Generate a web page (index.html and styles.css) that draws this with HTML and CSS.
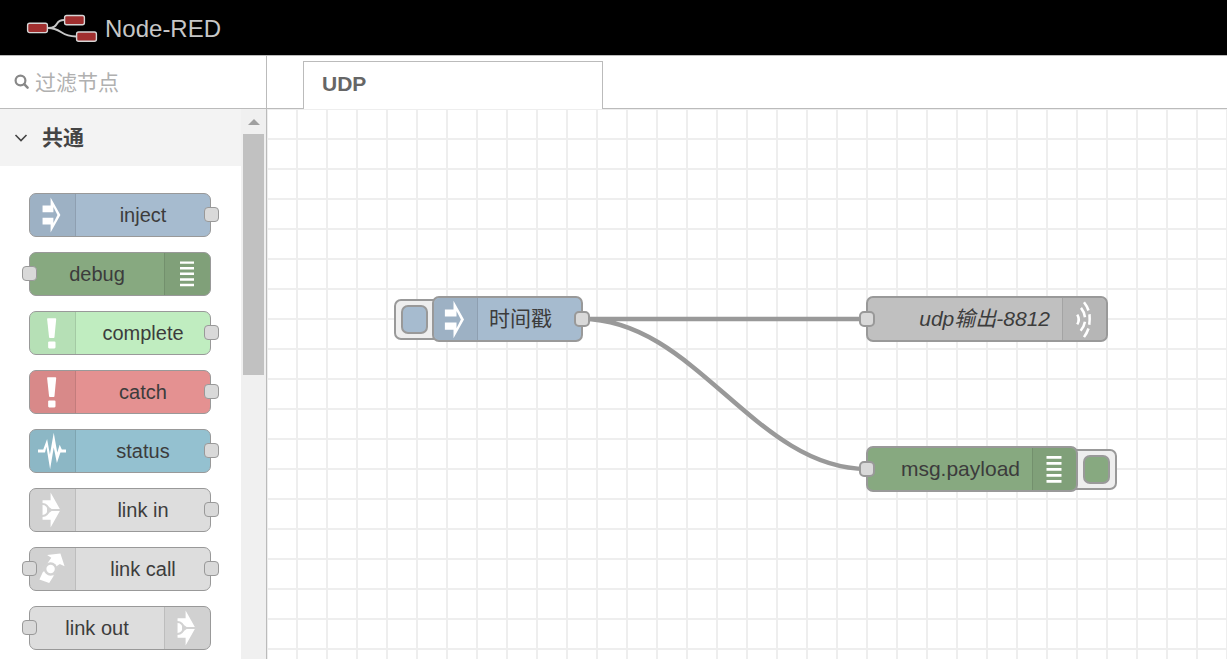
FILE: index.html
```
<!DOCTYPE html>
<html lang="zh-CN">
<head>
<meta charset="utf-8">
<title>Node-RED</title>
<link rel="stylesheet" href="styles.css">
</head>
<body>
<svg class="symbols" aria-hidden="true">
  <symbol id="i-inject" viewBox="0 0 40 60"><path fill="#fff" d="M18 5 32 30 18 55V43.500H6.500V34H22V41.500L27.800 30 22 18.500V26H6.500V16.500H18Z"/></symbol>
  <symbol id="i-debug" viewBox="0 0 40 60"><path fill="#fff" d="M10 12h20v3.500H10zM10 20h20v3.500H10zM10 28h20v3.500H10zM10 36h20v3.500H10zM10 44h20v3.500H10z"/></symbol>
  <symbol id="i-alert" viewBox="0 0 40 60"><path fill="#fff" d="M14 9H25Q26 9 26 10L23.500 36Q23.400 37 22.500 37H17Q16 37 15.800 36L13 10Q13 9 14 9Z"/><rect x="14.500" y="42" width="10.500" height="10" rx="1.500" fill="#fff"/></symbol>
  <symbol id="i-status" viewBox="0 0 40 60"><path fill="#fff" d="M0 28H7.500L13 13 17 35 22.500 4 27.500 32 31 21 34 28H40V32H32L27 47 22.500 25 17.300 56 12 24 10 32H0Z"/></symbol>
  <symbol id="i-link" viewBox="0 0 40 60"><path fill="#fff" d="M6.500 16H18V5L32 30 18 55V44H6.500Z"/><path fill="none" stroke="#d2d2d2" stroke-width="3" d="M5 21.500H6.500A8.500 8.500 0 0 1 6.500 38.500H5M15 30H33"/><path fill="#d2d2d2" d="M13 24 20 29V31L13 36Z"/></symbol>
  <symbol id="i-call" viewBox="0 0 40 60"><path fill="#fff" d="M13 10 32 8 38 26 31 23 28 29 23 39 16 50 2 45 8 32 14 21 19 14Z"/><circle cx="18" cy="30" r="9.500" fill="#d2d2d2"/><path fill="#d2d2d2" d="M5 28 14 20 11 33 7 34ZM25 27 31 23 26 38 22 40Z"/><circle cx="18" cy="30" r="6" fill="#fff"/></symbol>
  <symbol id="i-udp" viewBox="0 0 40 60"><path fill="none" stroke="#fff" stroke-width="3.400" d="M11 23.500Q15 30 11 36.500M16 14.500Q20.500 20 21.300 27M21.300 33Q20 40 15.500 45M20 7Q24 12 26 18M27.300 23Q28 30 27 37M26 42Q24 48 20 53.500"/></symbol>
</svg>

<header class="header">
  <svg class="logo" viewBox="0 0 72 30" aria-hidden="true">
    <path d="M22 14C34 14 28 6 38 6M22 14C36 14 34 22.500 50 22.500" fill="none" stroke="#c7c7c7" stroke-width="2"/>
    <g fill="#a02f2f" stroke="#d5d5d5" stroke-width="1.400"><rect x="1.600" y="9.300" width="19.800" height="9.300" rx="2"/><rect x="38.600" y="1.500" width="19.800" height="9.300" rx="2"/><rect x="50.600" y="18" width="19.800" height="9.300" rx="2"/></g>
  </svg>
  <span class="brand">Node-RED</span>
</header>

<main class="main">
  <aside class="palette">
    <label class="search">
      <svg class="search-icon" viewBox="0 0 16 16" aria-hidden="true"><circle cx="6.500" cy="6.500" r="4.900" fill="none" stroke="#888" stroke-width="2.200"/><path d="M10.200 10.200 13.600 13.600" stroke="#888" stroke-width="2.500" stroke-linecap="round"/></svg>
      <input class="search-input" type="text" placeholder="过滤节点" aria-label="过滤节点">
    </label>
    <div class="palette-body">
      <div class="palette-list">
        <button class="category"><svg class="chevron" viewBox="0 0 14 10" aria-hidden="true"><path d="M1.500 2 7 7.500 12.500 2" fill="none" stroke="#444" stroke-width="1.600"/></svg><span class="category-name">共通</span></button>
        <div class="nodes">
          <div class="node blue"><span class="icon"><svg><use href="#i-inject"/></svg></span><span class="label">inject</span><i class="port out"></i></div>
          <div class="node green flip"><span class="icon"><svg><use href="#i-debug"/></svg></span><span class="label">debug</span><i class="port in"></i></div>
          <div class="node mint"><span class="icon"><svg><use href="#i-alert"/></svg></span><span class="label">complete</span><i class="port out"></i></div>
          <div class="node red"><span class="icon"><svg><use href="#i-alert"/></svg></span><span class="label">catch</span><i class="port out"></i></div>
          <div class="node teal"><span class="icon"><svg><use href="#i-status"/></svg></span><span class="label">status</span><i class="port out"></i></div>
          <div class="node gray"><span class="icon"><svg><use href="#i-link"/></svg></span><span class="label">link in</span><i class="port out"></i></div>
          <div class="node gray"><span class="icon"><svg><use href="#i-call"/></svg></span><span class="label">link call</span><i class="port in"></i><i class="port out"></i></div>
          <div class="node gray flip"><span class="icon"><svg><use href="#i-link"/></svg></span><span class="label">link out</span><i class="port in"></i></div>
        </div>
      </div>
      <div class="scrollbar"><span class="scroll-arrow"></span><span class="scroll-thumb"></span></div>
    </div>
  </aside>

  <section class="workspace">
    <nav class="tabs"><button class="tab">UDP</button></nav>
    <div class="canvas">
      <svg class="wires" aria-hidden="true"><path d="M315 210H600M315 210C428 210 488 360 600 360"/></svg>
      <button class="trigger trigger-left" aria-label="时间戳"><span class="blue"></span></button>
      <div class="node flow-node blue at-inject"><span class="icon"><svg><use href="#i-inject"/></svg></span><span class="label cjk">时间戳</span><i class="port out"></i></div>
      <div class="node flow-node silver flip at-udp"><span class="icon"><svg><use href="#i-udp"/></svg></span><span class="label cjk"><em>udp输出-8812</em></span><i class="port in"></i></div>
      <button class="trigger trigger-right" aria-label="msg.payload"><span class="green"></span></button>
      <div class="node flow-node green flip at-debug"><span class="icon"><svg><use href="#i-debug"/></svg></span><span class="label">msg.payload</span><i class="port in"></i></div>
    </div>
  </section>
</main>
</body>
</html>
```
FILE: styles.css
```
* { box-sizing: border-box; }

body {
  margin: 0;
  height: 100vh;
  display: flex;
  flex-direction: column;
  overflow: hidden;
  background: #fff;
  color: #3c3c3c;
  font-family: "Liberation Sans", "Noto Sans CJK SC", sans-serif;
  font-size: 21px;
}

button, input { font: inherit; }

.symbols { position: absolute; width: 0; height: 0; }

.header {
  display: flex;
  align-items: center;
  gap: 7px;
  height: 56px;
  padding-left: 26px;
  background: #000;
  border-bottom: 1px solid #bbb;
}
.logo { width: 72px; height: 30px; margin-top: 2px; }
.brand { font-size: 24px; color: #c7c7c7; line-height: 28px; padding-top: 2px; }

.main { flex: 1; display: flex; min-height: 0; }

.palette {
  width: 267px;
  display: flex;
  flex-direction: column;
  border-right: 1px solid #bbb;
}
.search {
  display: flex;
  align-items: center;
  gap: 5px;
  height: 53px;
  padding-left: 14px;
  border-bottom: 1px solid #bbb;
}
.search-icon { width: 16px; height: 16px; }
.search-input {
  flex: 1;
  min-width: 0;
  padding: 2px 0 0;
  border: 0;
  outline: 0;
  background: none;
}
.search-input::placeholder { color: #b0b0b0; opacity: 1; }

.palette-body { flex: 1; display: flex; min-height: 0; }
.palette-list { flex: 1; overflow: hidden; }
.category {
  display: flex;
  align-items: center;
  gap: 14px;
  width: 100%;
  height: 57px;
  padding: 0 14px;
  border: 0;
  background: #f3f3f3;
  color: #444;
  font-weight: bold;
}
.category-name { padding-bottom: 4px; }
.chevron { width: 14px; height: 10px; }
.nodes {
  display: flex;
  flex-direction: column;
  gap: 15px;
  padding: 27px 30px 0 29px;
}

.scrollbar {
  width: 25px;
  display: flex;
  flex-direction: column;
  align-items: center;
  gap: 9px;
  padding-top: 10px;
  background: #f0f0f0;
}
.scroll-arrow {
  border: 6px solid transparent;
  border-top: 0;
  border-bottom-color: #a0a0a0;
}
.scroll-thumb { width: 21px; height: 241px; background: #c1c1c1; }

.node {
  position: relative;
  display: flex;
  height: 44px;
  border: 1px solid #999;
  border-radius: 7px;
  font-size: 20px;
}
.flip { flex-direction: row-reverse; }
.icon {
  width: 46px;
  display: flex;
  align-items: center;
  justify-content: center;
  padding-right: 2px;
  background: rgba(0, 0, 0, 0.05);
  border-right: 1px solid rgba(0, 0, 0, 0.1);
  border-radius: 6px 0 0 6px;
}
.flip .icon {
  border-right: 0;
  border-left: 1px solid rgba(0, 0, 0, 0.1);
  border-radius: 0 6px 6px 0;
}
.icon svg { width: 28px; height: 42px; }
.label {
  flex: 1;
  display: flex;
  align-items: center;
  justify-content: center;
  white-space: nowrap;
}

.port {
  position: absolute;
  top: 13px;
  width: 15px;
  height: 15px;
  background: #d9d9d9;
  border: 1px solid #999;
  border-radius: 4px;
}
.port.in { left: -8px; }
.port.out { right: -9px; }

.blue { background: #a6bbcf; }
.green { background: #87a980; }
.mint { background: #c0edc0; }
.red { background: #e49191; }
.teal { background: #94c1d0; }
.gray { background: #ddd; }
.silver { background: #c0c0c0; }

.workspace { flex: 1; display: flex; flex-direction: column; min-width: 0; }
.tabs {
  display: flex;
  height: 53px;
  padding: 5px 0 0 36px;
  border-bottom: 1px solid #bbb;
}
.tab {
  width: 300px;
  height: 48px;
  padding: 0 18px 4px;
  border: 1px solid #bbb;
  border-bottom: 0;
  background: #fff;
  color: #666;
  font-weight: bold;
  text-align: left;
}
.canvas {
  position: relative;
  flex: 1;
  overflow: hidden;
  background-image:
    linear-gradient(#eee 2px, transparent 2px),
    linear-gradient(90deg, #eee 2px, transparent 2px);
  background-size: 30px 30px;
  background-position: -1px -1px;
}
.wires { position: absolute; width: 100%; height: 100%; }
.wires path { fill: none; stroke: #999; stroke-width: 4.5; }

/* Nodes on the free canvas */
.flow-node { position: absolute; height: 46px; border-width: 2px; font-size: 21px; }
.flow-node .icon { width: 44px; }
.flow-node .icon svg { width: 30px; height: 45px; flex: none; }
.flow-node .label { padding: 0 12px 0 11px; justify-content: flex-start; }
.flow-node .cjk { padding-bottom: 4px; }
.flow-node.flip .label { justify-content: flex-end; }
.flow-node .port { width: 16px; height: 16px; border-width: 2px; border-radius: 5px; }
.flow-node .port.in { left: -9px; }
.at-inject { left: 165px; top: 187px; width: 151px; }
.at-udp { left: 599px; top: 187px; width: 242px; }
.at-debug { left: 599px; top: 337px; width: 212px; }

.trigger {
  position: absolute;
  width: 48px;
  height: 41px;
  display: flex;
  align-items: center;
  padding: 0 5px;
  border: 2px solid #999;
  border-radius: 7px;
  background: #eee;
}
.trigger span { width: 27px; height: 29px; border: 2px solid #999; border-radius: 7px; }
.trigger-left { left: 127px; top: 190px; }
.trigger-right { left: 802px; top: 340px; justify-content: flex-end; }
```
